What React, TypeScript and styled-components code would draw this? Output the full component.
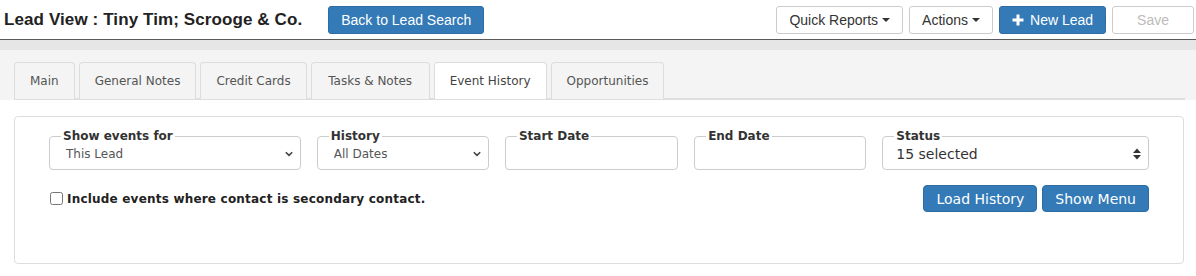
import React from "react";
import styled, { createGlobalStyle, css } from "styled-components";

const GlobalStyle = createGlobalStyle`
  body {
    margin: 0;
    background: #fff;
    font-family: "Liberation Sans", Arial, sans-serif;
  }
`;

const TopBar = styled.header`
  display: flex;
  align-items: center;
  height: 39px;
  padding: 0 2px 0 4px;
  border-bottom: 1px solid #5a5a5a;
  box-sizing: content-box;
`;

const Title = styled.h1`
  margin: 0;
  font-size: 17px;
  font-weight: bold;
  color: #222;
  letter-spacing: 0.1px;
`;

const Spacer = styled.div`
  flex: 1;
`;

const BarActions = styled.div`
  display: flex;
  gap: 6px;
`;

const BarButton = styled.button<{ $variant?: "primary" | "default" | "disabled" }>`
  display: inline-flex;
  align-items: center;
  gap: 6px;
  height: 28px;
  padding: 0 12px;
  border-radius: 3px;
  font-family: "Liberation Sans", Arial, sans-serif;
  font-size: 14px;
  cursor: pointer;
  border: 1px solid #ccc;
  background: #fff;
  color: #333;
  ${(p) =>
    p.$variant === "primary" &&
    css`
      background: #337ab7;
      border-color: #2e6da4;
      color: #fff;
    `}
  ${(p) =>
    p.$variant === "disabled" &&
    css`
      color: #bbb;
      border-color: #ccc;
      padding: 0 24px;
      cursor: default;
    `}
`;

const BackButton = styled(BarButton)`
  margin-left: 26px;
  padding: 0 12px;
`;

const Caret = styled.span`
  display: inline-block;
  width: 0;
  height: 0;
  margin-left: -2px;
  border-top: 4px solid #333;
  border-left: 4px solid transparent;
  border-right: 4px solid transparent;
`;

const Band = styled.div`
  height: 10px;
  background: #e6e6e6;
`;

const TabStrip = styled.div`
  background: #f4f4f4;
  padding: 12px 11px 0 14px;
`;

const TabList = styled.nav`
  display: flex;
  gap: 4px;
  border-bottom: 2px solid #dedede;
  height: 36px;
`;

const Tab = styled.div<{ $active?: boolean; $minWidth?: number }>`
  display: flex;
  align-items: center;
  justify-content: center;
  box-sizing: border-box;
  min-width: ${(p) => p.$minWidth ?? 0}px;
  height: 37px;
  padding: 0 15px;
  border: 1px solid #dcdcdc;
  border-bottom: none;
  border-radius: 4px 4px 0 0;
  background: ${(p) => (p.$active ? "#fff" : "#f4f4f4")};
  font-family: "DejaVu Sans", Verdana, sans-serif;
  font-size: 12px;
  color: ${(p) => (p.$active ? "#444" : "#555")};
  cursor: pointer;
`;

const Content = styled.main`
  padding: 16px 12px 0 14px;
`;

const Panel = styled.section`
  box-sizing: border-box;
  height: 148px;
  padding: 12px 34px 0;
  border: 1px solid #dddddd;
  border-radius: 4px;
  font-family: "DejaVu Sans", Verdana, sans-serif;
`;

const FieldRow = styled.div`
  display: flex;
  gap: 16px;
`;

const Field = styled.fieldset<{ $width: number }>`
  box-sizing: border-box;
  width: ${(p) => p.$width}px;
  height: 41px;
  margin: 0;
  padding: 0;
  border: 1px solid #cccccc;
  border-radius: 4px;
`;

const Legend = styled.legend`
  margin-left: 11px;
  padding: 0 2px;
  font-size: 12px;
  font-weight: bold;
  line-height: 14px;
  color: #333;
`;

const SelectWrap = styled.div`
  display: flex;
  align-items: center;
  height: 20px;
  margin-top: 1px;
  padding-right: 6px;
`;

const Select = styled.select`
  appearance: none;
  flex: 1;
  min-width: 0;
  height: 20px;
  padding: 0 0 0 16px;
  border: none;
  background: transparent;
  font-family: "DejaVu Sans", Verdana, sans-serif;
  font-size: 12px;
  color: #555;
  outline: none;
`;

const TextInput = styled.input`
  display: block;
  box-sizing: border-box;
  width: 100%;
  height: 22px;
  border: none;
  background: transparent;
  padding: 0 12px;
  outline: none;
`;

const StatusValue = styled.div`
  display: flex;
  align-items: center;
  justify-content: space-between;
  height: 22px;
  padding: 0 7px 0 13px;
  font-size: 14px;
  color: #333;
`;

const ActionRow = styled.div`
  display: flex;
  align-items: center;
  justify-content: space-between;
  margin-top: 15px;
`;

const CheckLabel = styled.label`
  display: flex;
  align-items: center;
  gap: 4px;
  font-size: 12px;
  font-weight: bold;
  letter-spacing: 0.2px;
  color: #222;
`;

const CheckBox = styled.input`
  width: 13px;
  height: 13px;
  margin: 0 0 0 1px;
`;

const PanelButtons = styled.div`
  display: flex;
  gap: 5px;
`;

const PanelButton = styled.button`
  height: 27px;
  padding: 0 12px;
  border: 1px solid #2e6da4;
  border-radius: 4px;
  background: #337ab7;
  color: #fff;
  font-family: "DejaVu Sans", Verdana, sans-serif;
  font-size: 14px;
  cursor: pointer;
`;

const tabs = [
  { label: "Main" },
  { label: "General Notes" },
  { label: "Credit Cards" },
  { label: "Tasks & Notes", minWidth: 119 },
  { label: "Event History", active: true },
  { label: "Opportunities" },
];

const ChevronDown = () => (
  <svg width="10" height="8" viewBox="0 0 10 8">
    <path d="M1.8 2.2 L5 5.4 L8.2 2.2" fill="none" stroke="#444" strokeWidth="1.6" />
  </svg>
);

const UpDown = () => (
  <svg width="8" height="12" viewBox="0 0 8 12">
    <path d="M0 5 L4 0.5 L8 5 Z M0 7 L4 11.5 L8 7 Z" fill="#333" />
  </svg>
);

const Plus = () => (
  <svg width="12" height="12" viewBox="0 0 12 12">
    <path d="M6 0.5 V11.5 M0.5 6 H11.5" stroke="#fff" strokeWidth="3" />
  </svg>
);

export default function App() {
  return (
    <>
      <GlobalStyle />
      <TopBar>
        <Title>Lead View : Tiny Tim; Scrooge &amp; Co.</Title>
        <BackButton $variant="primary">Back to Lead Search</BackButton>
        <Spacer />
        <BarActions>
          <BarButton>
            Quick Reports <Caret />
          </BarButton>
          <BarButton>
            Actions <Caret />
          </BarButton>
          <BarButton $variant="primary">
            <Plus /> New Lead
          </BarButton>
          <BarButton $variant="disabled">Save</BarButton>
        </BarActions>
      </TopBar>
      <Band />
      <TabStrip>
        <TabList>
          {tabs.map((t) => (
            <Tab key={t.label} $active={t.active} $minWidth={t.minWidth}>
              {t.label}
            </Tab>
          ))}
        </TabList>
      </TabStrip>
      <Content>
        <Panel>
          <FieldRow>
            <Field $width={253}>
              <Legend>Show events for</Legend>
              <SelectWrap>
                <Select defaultValue="lead">
                  <option value="lead">This Lead</option>
                </Select>
                <ChevronDown />
              </SelectWrap>
            </Field>
            <Field $width={173}>
              <Legend>History</Legend>
              <SelectWrap>
                <Select defaultValue="all">
                  <option value="all">All Dates</option>
                </Select>
                <ChevronDown />
              </SelectWrap>
            </Field>
            <Field $width={174}>
              <Legend>Start Date</Legend>
              <TextInput type="text" />
            </Field>
            <Field $width={173}>
              <Legend>End Date</Legend>
              <TextInput type="text" />
            </Field>
            <Field $width={268}>
              <Legend>Status</Legend>
              <StatusValue>
                15 selected <UpDown />
              </StatusValue>
            </Field>
          </FieldRow>
          <ActionRow>
            <CheckLabel>
              <CheckBox type="checkbox" />
              Include events where contact is secondary contact.
            </CheckLabel>
            <PanelButtons>
              <PanelButton>Load History</PanelButton>
              <PanelButton>Show Menu</PanelButton>
            </PanelButtons>
          </ActionRow>
        </Panel>
      </Content>
    </>
  );
}
